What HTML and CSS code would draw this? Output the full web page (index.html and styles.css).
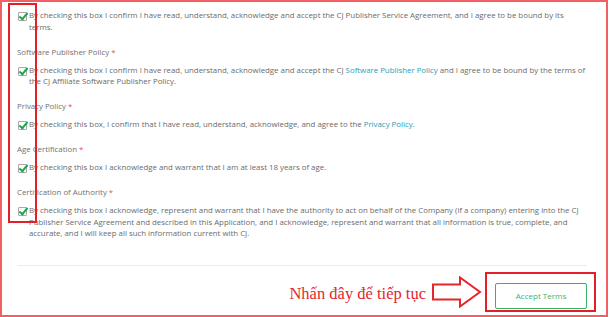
FILE: index.html
```html
<!DOCTYPE html>
<html>

<head>
    <title>Accept Terms</title>
    <link rel="stylesheet" href="styles.css">
</head>

<body>
    <div class="frame">
        <div class="terms">
            <div class="term">
                <label class="check">
                    <span class="box"></span>
                    <span>By checking this box I confirm I have read, understand, acknowledge and accept the CJ Publisher Service Agreement, and I agree to be bound by its<br>terms.</span>
                </label>
            </div>

            <div class="term">
                <div class="term-title">Software Publisher Policy <span class="req">*</span></div>
                <label class="check">
                    <span class="box"></span>
                    <span>By checking this box I confirm I have read, understand, acknowledge and accept the CJ <a href="#">Software Publisher Policy</a> and I agree to be bound by the terms of<br>the CJ Affiliate Software Publisher Policy.</span>
                </label>
            </div>

            <div class="term">
                <div class="term-title">Privacy Policy <span class="req">*</span></div>
                <label class="check">
                    <span class="box"></span>
                    <span>By checking this box, I confirm that I have read, understand, acknowledge, and agree to the <a href="#">Privacy Policy</a>.</span>
                </label>
            </div>

            <div class="term">
                <div class="term-title">Age Certification <span class="req">*</span></div>
                <label class="check">
                    <span class="box"></span>
                    <span>By checking this box I acknowledge and warrant that I am at least 18 years of age.</span>
                </label>
            </div>

            <div class="term">
                <div class="term-title">Certification of Authority <span class="req">*</span></div>
                <label class="check">
                    <span class="box"></span>
                    <span>By checking this box I acknowledge, represent and warrant that I have the authority to act on behalf of the Company (if a company) entering into the CJ<br>Publisher Service Agreement and described in this Application, and I acknowledge, represent and warrant that all information is true, complete, and<br>accurate, and I will keep all such information current with CJ.</span>
                </label>
            </div>

            <div class="mark-boxes"></div>
        </div>

        <div class="footer">
            <span class="hint">Nhấn đây để tiếp tục</span>
            <svg class="arrow" width="50" height="32" viewBox="0 0 50 32">
                <polygon points="1,8.5 28,8.5 28,1.5 48,16 28,30.5 28,23.5 1,23.5" fill="#fff" stroke="#e4262c" stroke-width="2" />
            </svg>
            <div class="mark-button">
                <button class="accept">Accept Terms</button>
            </div>
        </div>
    </div>
</body>

</html>
```

FILE: styles.css
```css
body {
    margin: 0;
    background-color: #fff;
    font-family: "Open Sans", "DejaVu Sans", sans-serif;
}

.frame {
    box-sizing: border-box;
    width: 608px;
    height: 317px;
    border: 2px solid #f26064;
    overflow: hidden;
}

.terms {
    position: relative;
    padding: 8px 2px 0 15px;
    font-size: 7.85px;
    line-height: 11.5px;
    color: #6b6b6b;
    white-space: nowrap;
}

.term {
    margin-bottom: 13.5px;
}

.term:last-of-type {
    margin-bottom: 0;
}

.term-title {
    margin-bottom: 6.5px;
    color: #707070;
}

.req {
    color: #e2574c;
}

.check {
    display: flex;
    align-items: flex-start;
}

.box {
    flex: none;
    position: relative;
    width: 7px;
    height: 7px;
    margin: 2px 2px 0 1px;
    border: 1px solid #a9a9a9;
    border-radius: 1px;
    background-color: #fff;
}

.box::after {
    content: "";
    position: absolute;
    left: 2px;
    top: -2px;
    width: 3px;
    height: 7px;
    border: solid #1fa64a;
    border-width: 0 2px 2px 0;
    transform: rotate(40deg);
}

a {
    color: #2b9bb5;
    text-decoration: none;
}

.mark-boxes {
    position: absolute;
    left: 6px;
    top: 1px;
    width: 25px;
    height: 216px;
    border: 2px solid #e3202a;
}

.footer {
    display: flex;
    justify-content: flex-end;
    align-items: center;
    margin: 25px 19px 0 15px;
    padding-top: 6px;
    border-top: 1px solid #ebebeb;
}

.hint {
    font-family: "Liberation Serif", serif;
    font-size: 16.5px;
    line-height: 18px;
    color: #e4262c;
    margin: 4px 6px 0 0;
}

.arrow {
    display: block;
    flex: none;
    margin-right: 3px;
}

.mark-button {
    padding: 9px 7px 1px 8px;
    border: 2px solid #e3202a;
    margin-right: -9px;
}

.accept {
    display: block;
    width: 92px;
    height: 26px;
    padding: 0;
    border: 1px solid #34b36a;
    border-radius: 2px;
    background-color: #fff;
    color: #3bb371;
    font-family: "Open Sans", sans-serif;
    font-size: 8px;
}
```
